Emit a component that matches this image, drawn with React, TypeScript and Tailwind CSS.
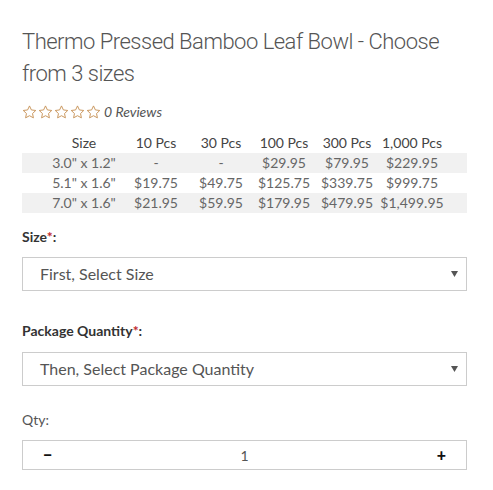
import React from 'react';

const headers = ['Size', '10 Pcs', '30 Pcs', '100 Pcs', '300 Pcs', '1,000 Pcs'];

const rows = [
  ['3.0" x 1.2"', '-', '-', '$29.95', '$79.95', '$229.95'],
  ['5.1" x 1.6"', '$19.75', '$49.75', '$125.75', '$339.75', '$999.75'],
  ['7.0" x 1.6"', '$21.95', '$59.95', '$179.95', '$479.95', '$1,499.95'],
];

const cols = 'grid grid-cols-[68px_76px_54px_72px_54px_76px] pl-[28px]';

function Star() {
  return (
    <svg width="15" height="14" viewBox="0 0 24 23" fill="none" stroke="#c9955b" strokeWidth="1.6" strokeLinejoin="round">
      <path d="M12 1.5l3.1 6.6 7.2.9-5.3 5 1.4 7.1L12 17.6l-6.4 3.5L7 14l-5.3-5 7.2-.9z" />
    </svg>
  );
}

function Caret() {
  return (
    <svg width="7" height="6" viewBox="0 0 7 6" className="shrink-0">
      <path d="M0 0h7L3.5 6z" fill="#555" />
    </svg>
  );
}

function SelectBox({ text }: { text: string }) {
  return (
    <div className="flex h-[34px] items-center justify-between border border-[#cccccc] bg-white pl-[17px] pr-[8px]">
      <span className="text-[16px] text-[#555]">{text}</span>
      <Caret />
    </div>
  );
}

function Label({ text, required }: { text: string; required?: boolean }) {
  return (
    <div className="text-[14px] font-bold leading-[20px] text-[#333]">
      {text}
      {required && <span className="text-[#c0282d]">*</span>}:
    </div>
  );
}

export default function App() {
  return (
    <div className="min-h-[490px] w-[493px] bg-white pl-[22px] pr-[26px] pt-[26px] font-['Lato',sans-serif]">
      <h1 className="font-['Roboto',sans-serif] text-[22px] font-light leading-[32px] tracking-[-0.5px] text-[#555]">
        Thermo Pressed Bamboo Leaf Bowl - Choose from 3 sizes
      </h1>

      <div className="mt-[11px] flex items-center gap-[3px]">
        <div className="flex gap-[1px]">
          <Star />
          <Star />
          <Star />
          <Star />
          <Star />
        </div>
        <span className="text-[14px] italic text-[#555]">0 Reviews</span>
      </div>

      <div className="mt-[11px] text-[14px] leading-[20px] text-[#666]">
        <div className={`${cols} h-[20px] items-center text-center text-[#444]`}>
          {headers.map((h) => (
            <div key={h}>{h}</div>
          ))}
        </div>
        {rows.map((r, i) => (
          <div
            key={i}
            className={`${cols} h-[20px] items-center text-center ${i % 2 === 0 ? 'bg-[#f1f1f1]' : ''}`}
          >
            {r.map((c, j) => (
              <div key={j} className="whitespace-nowrap">
                {c}
              </div>
            ))}
          </div>
        ))}
      </div>

      <div className="mt-[14px]">
        <Label text="Size" required />
      </div>
      <div className="mt-[10px]">
        <SelectBox text="First, Select Size" />
      </div>

      <div className="mt-[30px]">
        <Label text="Package Quantity" required />
      </div>
      <div className="mt-[11px]">
        <SelectBox text="Then, Select Package Quantity" />
      </div>

      <div className="mt-[24px] text-[14px] leading-[20px] text-[#555]">Qty:</div>
      <div className="mt-[10px] flex h-[30px] items-center justify-between border border-[#cccccc] bg-white px-[20px]">
        <span className="text-[16px] font-black text-[#111]">&minus;</span>
        <span className="text-[14px] text-[#555]">1</span>
        <span className="text-[16px] font-black text-[#111]">+</span>
      </div>
    </div>
  );
}
